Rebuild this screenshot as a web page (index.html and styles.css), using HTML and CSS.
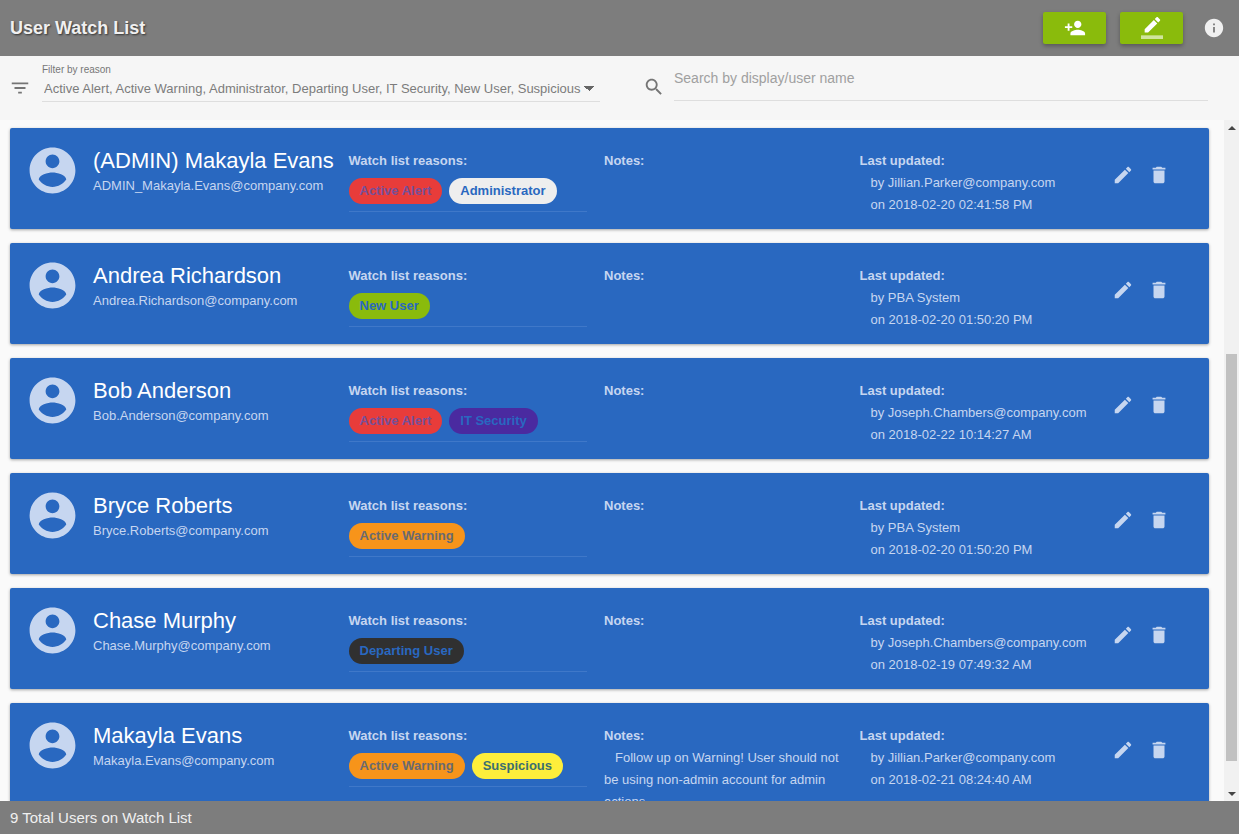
FILE: index.html
```html
<!DOCTYPE html>
<html lang="en">
<head>
<meta charset="utf-8">
<meta name="viewport" content="width=device-width, initial-scale=1">
<title>User Watch List</title>
<link rel="stylesheet" href="styles.css">
</head>
<body>
<svg class="sprite" aria-hidden="true">
  <symbol id="account" viewBox="0 0 24 24"><path d="M12 2C6.480 2 2 6.480 2 12s4.480 10 10 10 10-4.480 10-10S17.520 2 12 2zm0 3c1.660 0 3 1.340 3 3s-1.340 3-3 3-3-1.340-3-3 1.340-3 3-3zm0 14.200c-2.500 0-4.710-1.280-6-3.220.030-1.990 4-3.080 6-3.080 1.990 0 5.970 1.090 6 3.080-1.290 1.940-3.500 3.220-6 3.220z"/></symbol>
  <symbol id="edit" viewBox="0 0 24 24"><path d="M3 17.250V21h3.750L17.810 9.940l-3.750-3.750L3 17.250zM20.710 7.040c.390-.390.390-1.020 0-1.410l-2.340-2.340c-.390-.390-1.020-.390-1.410 0l-1.830 1.830 3.750 3.750 1.830-1.830z"/></symbol>
  <symbol id="delete" viewBox="0 0 24 24"><path d="M6 19c0 1.100.900 2 2 2h8c1.100 0 2-.900 2-2V7H6v12zM19 4h-3.500l-1-1h-5l-1 1H5v2h14V4z"/></symbol>
  <symbol id="person-add" viewBox="0 0 24 24"><path d="M15 12c2.210 0 4-1.790 4-4s-1.790-4-4-4-4 1.790-4 4 1.790 4 4 4zm-9-2V7H4v3H1v2h3v3h2v-3h3v-2H6zm9 4c-2.670 0-8 1.340-8 4v2h16v-2c0-2.660-5.330-4-8-4z"/></symbol>
  <symbol id="border-color" viewBox="0 0 24 24"><path d="M17.750 7L14 3.250l-10 10V17h3.750l10-10zm2.960-2.960c.390-.390.390-1.020 0-1.410L18.370.290c-.390-.390-1.020-.390-1.410 0L15 2.250 18.750 6l1.960-1.960z"/><path fill-opacity=".6" d="M0 20h24v4H0z"/></symbol>
  <symbol id="info" viewBox="0 0 24 24"><path d="M12 2C6.480 2 2 6.480 2 12s4.480 10 10 10 10-4.480 10-10S17.520 2 12 2zm1 15h-2v-6h2v6zm0-8h-2V7h2v2z"/></symbol>
  <symbol id="filter" viewBox="0 0 24 24"><path d="M10 18h4v-2h-4v2zM3 6v2h18V6H3zm3 7h12v-2H6v2z"/></symbol>
  <symbol id="search" viewBox="0 0 24 24"><path d="M15.500 14h-.790l-.280-.270C15.410 12.590 16 11.110 16 9.500 16 5.910 13.090 3 9.500 3S3 5.910 3 9.500 5.910 16 9.500 16c1.610 0 3.090-.590 4.230-1.570l.270.280v.790l5 4.990L20.490 19l-4.990-5zm-6 0C7.010 14 5 11.990 5 9.500S7.010 5 9.500 5 14 7.010 14 9.500 11.990 14 9.500 14z"/></symbol>
</svg>

<header class="topbar">
  <h1 class="title">User Watch List</h1>
  <button class="action" type="button" aria-label="Add user"><svg class="icon"><use href="#person-add"/></svg></button>
  <button class="action" type="button" aria-label="Edit reasons"><svg class="icon"><use href="#border-color"/></svg></button>
  <button class="icon-button info" type="button" aria-label="Information"><svg class="icon"><use href="#info"/></svg></button>
</header>

<form class="filters">
  <svg class="icon filter-icon"><use href="#filter"/></svg>
  <div class="filter-field">
    <label class="filter-label" for="reason">Filter by reason</label>
    <select class="filter-select" id="reason">
      <option>Active Alert, Active Warning, Administrator, Departing User, IT Security, New User, Suspicious</option>
    </select>
  </div>
  <svg class="icon search-icon"><use href="#search"/></svg>
  <input class="search" type="text" aria-label="Search by display/user name" placeholder="Search by display/user name">
</form>

<div class="content">
  <main class="list">
    <article class="card">
      <svg class="avatar"><use href="#account"/></svg>
      <div class="who"><h2 class="name">(ADMIN) Makayla Evans</h2><p class="email">ADMIN_Makayla.Evans@company.com</p></div>
      <div class="field"><h3 class="label">Watch list reasons:</h3><div class="chips"><span class="chip alert">Active Alert</span><span class="chip admin">Administrator</span></div></div>
      <div class="field"><h3 class="label">Notes:</h3></div>
      <div class="field"><h3 class="label">Last updated:</h3><p class="line">by Jillian.Parker@company.com</p><p class="line">on 2018-02-20 02:41:58 PM</p></div>
      <div class="tools"><button class="icon-button" type="button" aria-label="Edit"><svg class="icon"><use href="#edit"/></svg></button><button class="icon-button" type="button" aria-label="Delete"><svg class="icon"><use href="#delete"/></svg></button></div>
    </article>
    <article class="card">
      <svg class="avatar"><use href="#account"/></svg>
      <div class="who"><h2 class="name">Andrea Richardson</h2><p class="email">Andrea.Richardson@company.com</p></div>
      <div class="field"><h3 class="label">Watch list reasons:</h3><div class="chips"><span class="chip new">New User</span></div></div>
      <div class="field"><h3 class="label">Notes:</h3></div>
      <div class="field"><h3 class="label">Last updated:</h3><p class="line">by PBA System</p><p class="line">on 2018-02-20 01:50:20 PM</p></div>
      <div class="tools"><button class="icon-button" type="button" aria-label="Edit"><svg class="icon"><use href="#edit"/></svg></button><button class="icon-button" type="button" aria-label="Delete"><svg class="icon"><use href="#delete"/></svg></button></div>
    </article>
    <article class="card">
      <svg class="avatar"><use href="#account"/></svg>
      <div class="who"><h2 class="name">Bob Anderson</h2><p class="email">Bob.Anderson@company.com</p></div>
      <div class="field"><h3 class="label">Watch list reasons:</h3><div class="chips"><span class="chip alert">Active Alert</span><span class="chip security">IT Security</span></div></div>
      <div class="field"><h3 class="label">Notes:</h3></div>
      <div class="field"><h3 class="label">Last updated:</h3><p class="line">by Joseph.Chambers@company.com</p><p class="line">on 2018-02-22 10:14:27 AM</p></div>
      <div class="tools"><button class="icon-button" type="button" aria-label="Edit"><svg class="icon"><use href="#edit"/></svg></button><button class="icon-button" type="button" aria-label="Delete"><svg class="icon"><use href="#delete"/></svg></button></div>
    </article>
    <article class="card">
      <svg class="avatar"><use href="#account"/></svg>
      <div class="who"><h2 class="name">Bryce Roberts</h2><p class="email">Bryce.Roberts@company.com</p></div>
      <div class="field"><h3 class="label">Watch list reasons:</h3><div class="chips"><span class="chip warning">Active Warning</span></div></div>
      <div class="field"><h3 class="label">Notes:</h3></div>
      <div class="field"><h3 class="label">Last updated:</h3><p class="line">by PBA System</p><p class="line">on 2018-02-20 01:50:20 PM</p></div>
      <div class="tools"><button class="icon-button" type="button" aria-label="Edit"><svg class="icon"><use href="#edit"/></svg></button><button class="icon-button" type="button" aria-label="Delete"><svg class="icon"><use href="#delete"/></svg></button></div>
    </article>
    <article class="card">
      <svg class="avatar"><use href="#account"/></svg>
      <div class="who"><h2 class="name">Chase Murphy</h2><p class="email">Chase.Murphy@company.com</p></div>
      <div class="field"><h3 class="label">Watch list reasons:</h3><div class="chips"><span class="chip departing">Departing User</span></div></div>
      <div class="field"><h3 class="label">Notes:</h3></div>
      <div class="field"><h3 class="label">Last updated:</h3><p class="line">by Joseph.Chambers@company.com</p><p class="line">on 2018-02-19 07:49:32 AM</p></div>
      <div class="tools"><button class="icon-button" type="button" aria-label="Edit"><svg class="icon"><use href="#edit"/></svg></button><button class="icon-button" type="button" aria-label="Delete"><svg class="icon"><use href="#delete"/></svg></button></div>
    </article>
    <article class="card">
      <svg class="avatar"><use href="#account"/></svg>
      <div class="who"><h2 class="name">Makayla Evans</h2><p class="email">Makayla.Evans@company.com</p></div>
      <div class="field"><h3 class="label">Watch list reasons:</h3><div class="chips"><span class="chip warning">Active Warning</span><span class="chip suspicious">Suspicious</span></div></div>
      <div class="field"><h3 class="label">Notes:</h3><p class="note">Follow up on Warning! User should not be using non-admin account for admin actions.</p></div>
      <div class="field"><h3 class="label">Last updated:</h3><p class="line">by Jillian.Parker@company.com</p><p class="line">on 2018-02-21 08:24:40 AM</p></div>
      <div class="tools"><button class="icon-button" type="button" aria-label="Edit"><svg class="icon"><use href="#edit"/></svg></button><button class="icon-button" type="button" aria-label="Delete"><svg class="icon"><use href="#delete"/></svg></button></div>
    </article>
  </main>
  <div class="scrollbar" aria-hidden="true">
    <span class="arrow up"></span>
    <div class="track"><div class="thumb"></div></div>
    <span class="arrow down"></span>
  </div>
</div>

<footer class="footer">9 Total Users on Watch List</footer>
</body>
</html>
```

FILE: styles.css
```css
* { box-sizing: border-box; }

body {
  margin: 0;
  height: 100vh;
  display: flex;
  flex-direction: column;
  overflow: hidden;
  background: #fafafa;
  font: 13px/22px "Liberation Sans", Arial, sans-serif;
}

h1, h2, h3, p { margin: 0; }

.sprite { position: absolute; width: 0; height: 0; }

.icon { display: block; flex: none; width: 22px; height: 22px; fill: currentColor; }

button { border: 0; padding: 0; cursor: pointer; }

.icon-button { background: none; color: inherit; }

/* Top bar */
.topbar {
  flex: none;
  display: flex;
  align-items: center;
  gap: 14px;
  height: 56px;
  padding: 0 14px 0 10px;
  background: #7d7d7d;
  color: #f0f0f0;
}

.title {
  flex: 1;
  font-size: 18px;
  font-weight: bold;
  text-shadow: 1px 1px 2px #333;
}

.action {
  display: flex;
  align-items: center;
  justify-content: center;
  width: 63px;
  height: 32px;
  border-radius: 2px;
  background: #8abb0c;
  color: #fff;
  box-shadow: 0 2px 4px rgba(0, 0, 0, .3);
}

.info { margin-left: 6px; }

/* Filters */
.filters {
  flex: none;
  display: flex;
  align-items: flex-start;
  height: 64px;
  padding: 0 31px 0 9px;
  background: #f6f6f6;
  color: #757575;
}

.filter-icon { margin: 21px 11px 0 0; }

.filter-field {
  flex: 558 1 0;
  min-width: 0;
  display: flex;
  flex-direction: column;
  padding-top: 8px;
}

.filter-label { font-size: 10px; line-height: 12px; color: #777; }

.filter-select {
  appearance: none;
  width: 100%;
  height: 26px;
  border: 0;
  border-bottom: 1px solid #dedede;
  border-radius: 0;
  padding: 0 18px 0 2px;
  background: conic-gradient(from -45deg at 50% 100%, #666 90deg, transparent 0) no-repeat right 6px top 10px / 10px 5px;
  color: #7c7c7c;
  font: 13px "Liberation Sans", Arial, sans-serif;
}

.search-icon { margin: 20px 9px 0 43px; }

.search {
  flex: 534 1 0;
  min-width: 0;
  height: 45px;
  border: 0;
  border-bottom: 1px solid #dedede;
  padding: 0;
  background: none;
  color: #555;
  font: 14px "Liberation Sans", Arial, sans-serif;
}

.search::placeholder { color: #a0a0a0; opacity: 1; }

/* List */
.content { flex: 1; min-height: 0; display: flex; }

.list {
  flex: 1;
  min-width: 0;
  display: flex;
  flex-direction: column;
  gap: 14px;
  padding: 8px 15px 0 10px;
  overflow: hidden;
}

.card {
  flex: none;
  display: grid;
  grid-template-columns: 68px repeat(4, minmax(0, 1fr)) 94px;
  min-height: 101px;
  padding: 15px 0 10px 15px;
  border-radius: 2px;
  background: #2968c0;
  color: #c6d6f0;
  box-shadow: 0 1px 3px rgba(0, 0, 0, .35);
}

.avatar { width: 55px; height: 55px; fill: currentColor; }

.who { padding-top: 5px; white-space: nowrap; }

.name { font-size: 22px; line-height: 26px; font-weight: normal; color: #fff; }

.email { line-height: 24px; }

.field { padding: 7px 17px 0 0; }

.label { font-size: 13px; line-height: 22px; font-weight: bold; }

.line { padding-left: 11px; white-space: nowrap; }

.note { text-indent: 11px; }

.chips {
  display: flex;
  gap: 7px;
  padding: 6px 0 7px;
  border-bottom: 1px solid #3f78c9;
}

.chip {
  border-radius: 13px;
  padding: 0 11px;
  color: #2968c0;
  font-weight: bold;
  line-height: 26px;
}

.alert { background: #e83c3a; color: #75509a; }
.admin { background: #eee; }
.new { background: #8abb0c; }
.security { background: #4a2aa0; }
.warning { background: #f7941a; color: #6a6a70; }
.departing { background: #303030; }
.suspicious { background: #fdee3b; color: #3c6e70; }

.tools {
  display: flex;
  align-items: flex-start;
  justify-content: flex-end;
  gap: 14px;
  padding: 21px 39px 0 0;
}

/* Scrollbar */
.scrollbar {
  flex: none;
  display: flex;
  flex-direction: column;
  align-items: center;
  width: 15px;
  background: #f1f1f1;
}

.arrow { height: 15px; display: flex; align-items: center; }
.arrow::before { content: ""; border: 4px solid transparent; }
.up::before { border-top: 0; border-bottom-color: #444; }
.down::before { border-bottom: 0; border-top-color: #444; }

.track { flex: 1; display: flex; flex-direction: column; justify-content: flex-end; width: 11px; padding-bottom: 25px; }
.thumb { height: 65%; background: #c1c1c1; }

/* Footer */
.footer {
  flex: none;
  padding: 6px 10px 5px;
  background: #7d7d7d;
  color: #f0f0f0;
  font-size: 15px;
}
```
